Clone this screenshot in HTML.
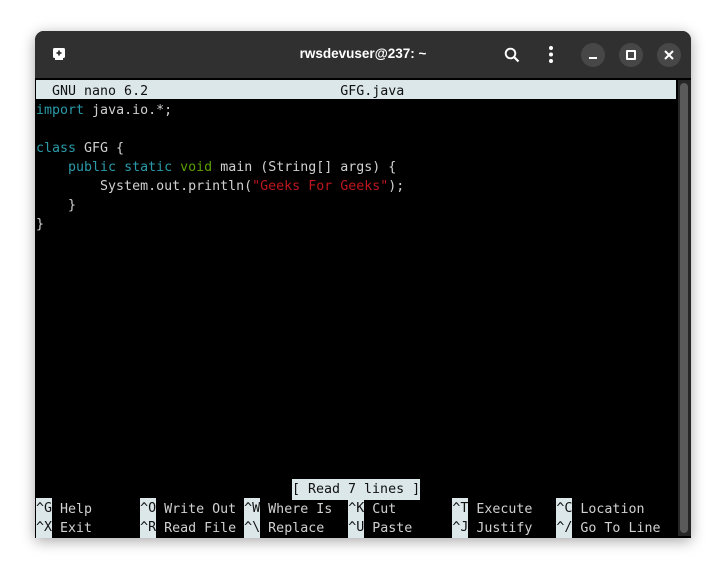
<!DOCTYPE html>
<html><head><meta charset="utf-8"><style>
html,body{margin:0;padding:0;width:726px;height:575px;background:#fff;overflow:hidden}
.win{position:absolute;left:35px;top:31px;width:656px;height:507px;background:#000;border-radius:9px 9px 0 0;box-shadow:0 3px 14px rgba(0,0,0,.35);overflow:hidden}
.tb{position:absolute;left:0;top:0;width:656px;height:47px;background:#303030}
.title{position:absolute;left:0;width:656px;top:15px;text-align:center;color:#fff;font:bold 13.5px "Liberation Sans",sans-serif;padding-left:0}
.term{position:absolute;left:1px;top:49px;width:640px;height:456px;background:#000;font-family:"DejaVu Sans Mono","Liberation Mono",monospace;font-size:13.3px;color:#d0d0d0}
.r{position:absolute;left:0;height:17px;padding-top:2px;line-height:19px;white-space:pre}
.r span.hl{display:inline-block;height:19px;margin-top:-2px;padding-top:2px;vertical-align:top;line-height:17px}
.hl{background:#dbe7e9;color:#111}
.k{color:#2a9aa8}.g{color:#5aa000}.s{color:#c0161e}
.sb{position:absolute;left:643px;top:49px;width:13px;height:456px;background:#262626}
.sb div{position:absolute;left:2px;top:3px;width:8px;height:450px;border-radius:4px;background:#5a5a5a}
.btn{position:absolute;top:12px;width:24px;height:24px;border-radius:12px;background:#474747}
</style></head><body>
<div class="win">
<div class="tb">
<svg style="position:absolute;left:17px;top:16px" width="14" height="14" viewBox="0 0 14 14"><rect x="1" y="1" width="12" height="10" rx="1.5" fill="#fff"/><rect x="3" y="11" width="8" height="2" fill="#fff"/><path d="M7 3.5v5M4.5 6h5" stroke="#303030" stroke-width="1.8"/></svg>
<div class="title">rwsdevuser@237: ~</div>
<svg style="position:absolute;left:469px;top:16px" width="16" height="16" viewBox="0 0 16 16"><circle cx="6.5" cy="6.5" r="4.8" fill="none" stroke="#fff" stroke-width="1.9"/><path d="M10 10l4.5 4.5" stroke="#fff" stroke-width="2.2"/></svg>
<svg style="position:absolute;left:513px;top:14px" width="6" height="20"><circle cx="3" cy="3" r="2" fill="#fff"/><circle cx="3" cy="9.5" r="2" fill="#fff"/><circle cx="3" cy="16" r="2" fill="#fff"/></svg>
<div class="btn" style="left:546px"><div style="position:absolute;left:8px;top:14px;width:8px;height:2px;background:#fff"></div></div>
<div class="btn" style="left:584px"><div style="position:absolute;left:7px;top:7px;width:6px;height:6px;border:2px solid #fff;border-radius:1px"></div></div>
<div class="btn" style="left:622px"><svg style="position:absolute;left:7px;top:7px" width="10" height="10"><path d="M1 1l8 8M9 1l-8 8" stroke="#fff" stroke-width="2"/></svg></div>
</div>
<div class="term">
<div class="r hl" style="top:0;width:640px">  GNU nano 6.2                        GFG.java</div>
<div class="r" style="top:19px"><span class="k">import</span> java.io.*;</div>
<div class="r" style="top:57px"><span class="k">class</span> GFG {</div>
<div class="r" style="top:76px">    <span class="k">public</span> <span class="k">static</span> <span class="g">void</span> main (String[] args) {</div>
<div class="r" style="top:95px">        System.out.println(<span class="s">"Geeks For Geeks"</span>);</div>
<div class="r" style="top:114px">    }</div>
<div class="r" style="top:133px">}</div>
<div class="r" style="top:399px;left:256px"><span class="hl">[ Read 7 lines ]</span></div>
<div class="r" style="top:418px"><span class="hl">^G</span> Help      <span class="hl">^O</span> Write Out <span class="hl">^W</span> Where Is  <span class="hl">^K</span> Cut       <span class="hl">^T</span> Execute   <span class="hl">^C</span> Location</div>
<div class="r" style="top:437px"><span class="hl">^X</span> Exit      <span class="hl">^R</span> Read File <span class="hl">^\</span> Replace   <span class="hl">^U</span> Paste     <span class="hl">^J</span> Justify   <span class="hl">^/</span> Go To Line</div>
</div>
<div class="sb"><div></div></div>
</div>
</body></html>
